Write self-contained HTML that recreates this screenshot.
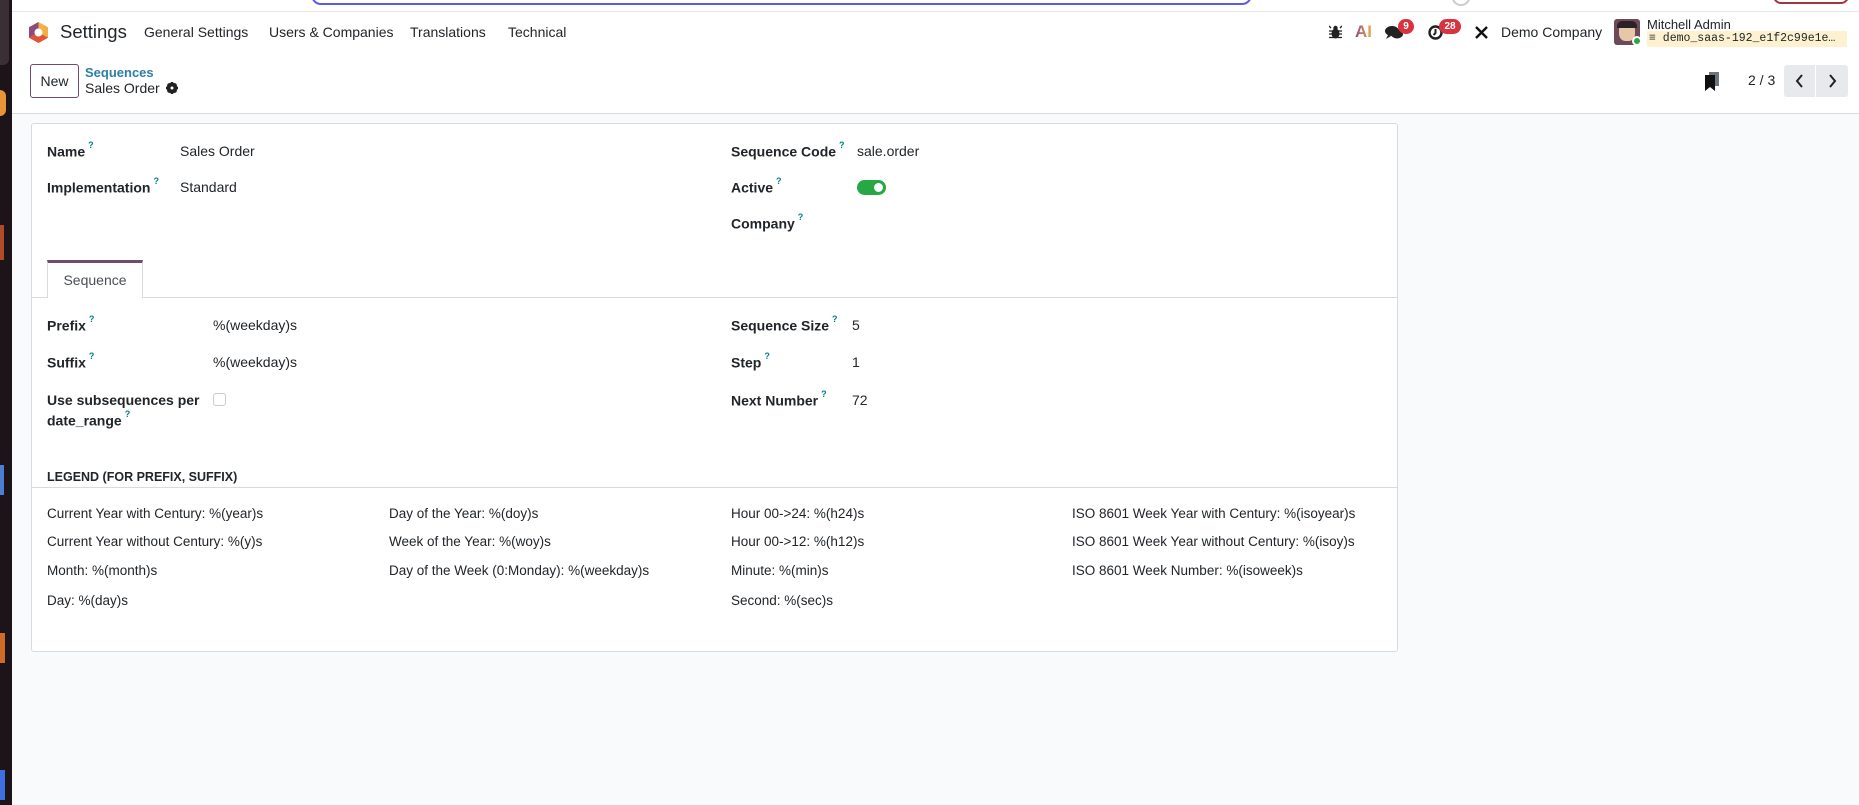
<!DOCTYPE html>
<html><head><meta charset="utf-8">
<style>
*{box-sizing:border-box;margin:0;padding:0}
body{width:1859px;height:805px;overflow:hidden;background:#f9fafb;font-family:"Liberation Sans",sans-serif;color:#212529;position:relative}
.a{position:absolute;white-space:nowrap}
.lbl{font-weight:bold;font-size:14px;color:#212529}
.v{font-size:14px}
sup.q{color:#017e84;font-size:9px;font-weight:bold;margin-left:3px;position:relative;top:-3px}
.nav{font-size:14px;color:#212529}
.lg{font-size:13.5px}
</style></head><body>
<div class="a" style="left:0;top:0;width:1859px;height:12px;background:#fff;border-bottom:1px solid #e5e7ea"></div>
<div class="a" style="left:311px;top:-20px;width:941px;height:25px;border:2px solid #5b5ce6;border-radius:10px"></div>
<div class="a" style="left:1452px;top:-10px;width:18px;height:16px;border:2px solid #ccc;border-radius:50%"></div>
<div class="a" style="left:1773px;top:-12px;width:76px;height:16px;border:2px solid #a3333f;border-radius:8px"></div>
<div class="a" style="left:0;top:0;width:12px;height:805px;background:#1c1418"></div>
<div class="a" style="left:0;top:0;width:9px;height:65px;background:#3a2f35;border-radius:0 0 6px 0"></div>
<div class="a" style="left:0;top:90px;width:6px;height:26px;background:#e8953a;border-radius:0 6px 6px 0"></div>
<div class="a" style="left:0;top:225px;width:4px;height:35px;background:#b04a2a"></div>
<div class="a" style="left:0;top:465px;width:4px;height:30px;background:#4a7fd6"></div>
<div class="a" style="left:0;top:633px;width:5px;height:30px;background:#d06a2a"></div>
<div class="a" style="left:0;top:770px;width:5px;height:30px;background:#3d6fe0"></div>
<div class="a" style="left:12px;top:12px;width:1847px;height:41px;background:#fff"></div>
<svg class="a" style="left:29px;top:22px" width="19" height="21" viewBox="0 0 19 21">
<polygon points="9.5,0 19,5.3 19,15.7 9.5,21 0,15.7 0,5.3" fill="#f0b045"/>
<polygon points="9.5,0 0,5.3 0,15.7 9.5,10.5" fill="#8e4a7f"/>
<polygon points="0,15.7 9.5,21 19,15.7 9.5,10.5" fill="#e2533c"/>
<circle cx="9.5" cy="10.5" r="4" fill="#fff"/></svg>
<div class="a" style="left:60px;top:21px;font-size:18.5px;color:#212529">Settings</div>
<div class="a nav" style="left:144px;top:24px">General Settings</div>
<div class="a nav" style="left:269px;top:24px">Users &amp; Companies</div>
<div class="a nav" style="left:410px;top:24px">Translations</div>
<div class="a nav" style="left:508px;top:24px">Technical</div>
<svg class="a" style="left:1329px;top:25px" width="13" height="14" viewBox="0 0 13 14"><ellipse cx="6.5" cy="8.5" rx="4" ry="5" fill="#222"/><circle cx="6.5" cy="3" r="2.2" fill="#222"/><path d="M0 6h13M0 9h13M0 12.5h13M2 3L0 1M11 3l2-2" stroke="#222" stroke-width="1.3"/></svg>
<div class="a" style="left:1355px;top:22px;font-size:17px;font-weight:bold;background:linear-gradient(90deg,#8e4a7f,#f0b045);-webkit-background-clip:text;color:transparent">AI</div>
<svg class="a" style="left:1385px;top:25px" width="18" height="15" viewBox="0 0 18 15"><ellipse cx="7" cy="6" rx="7" ry="5" fill="#222"/><ellipse cx="12" cy="9" rx="6" ry="4.5" fill="#222"/><path d="M3 10l-2 4 5-3z" fill="#222"/></svg>
<div class="a" style="left:1398px;top:19px;width:16px;height:15px;background:#d9333f;border-radius:8px;color:#fff;font-size:10px;font-weight:bold;text-align:center;line-height:15px">9</div>
<svg class="a" style="left:1428px;top:25px" width="15" height="15" viewBox="0 0 15 15"><circle cx="7.5" cy="7.5" r="6" fill="none" stroke="#222" stroke-width="2.4"/><path d="M7.5 4v4l-2 2" stroke="#222" stroke-width="2" fill="none"/></svg>
<div class="a" style="left:1439px;top:19px;width:22px;height:15px;background:#d9333f;border-radius:8px;color:#fff;font-size:10px;font-weight:bold;text-align:center;line-height:15px">28</div>
<svg class="a" style="left:1474px;top:25px" width="15" height="15" viewBox="0 0 15 15"><path d="M2 2l11 11M13 2L2 13" stroke="#111" stroke-width="2.4"/></svg>
<div class="a" style="left:1501px;top:24px;font-size:14px">Demo Company</div>
<div class="a" style="left:1614px;top:19px;width:26px;height:26px;background:#6b4a5a;border-radius:3px;overflow:hidden"><div style="position:absolute;left:5px;top:4px;width:16px;height:18px;background:#e8c6a8;border-radius:40%"></div><div style="position:absolute;left:3px;top:2px;width:20px;height:7px;background:#2a2226;border-radius:5px 5px 0 0"></div></div>
<div class="a" style="left:1632px;top:36px;width:10px;height:10px;background:#28a745;border:2px solid #fff;border-radius:50%"></div>
<div class="a" style="left:1647px;top:17px;font-size:13px">Mitchell Admin</div>
<div class="a" style="left:1647px;top:31px;width:200px;height:16px;background:#fdf1cf;font-family:'Liberation Mono',monospace;font-size:11.5px;line-height:16px;padding-left:2px;overflow:hidden">≡ demo_saas-192_e1f2c99e1e…</div>
<div class="a" style="left:12px;top:53px;width:1847px;height:61px;background:#fff;border-bottom:1px solid #d8dadd"></div>
<div class="a" style="left:30px;top:64px;width:49px;height:34px;border:1px solid #714b67;border-radius:3px;font-size:14px;text-align:center;line-height:32px;background:#fff">New</div>
<div class="a" style="left:85px;top:65px;font-size:13px;font-weight:bold;color:#2c7fa8">Sequences</div>
<div class="a" style="left:85px;top:80px;font-size:14px">Sales Order</div>
<svg class="a" style="left:166px;top:82px" width="12" height="12" viewBox="0 0 12 12"><circle cx="6" cy="6" r="4" fill="none" stroke="#222" stroke-width="3"/><path d="M6 0v12M0 6h12M1.8 1.8l8.4 8.4M10.2 1.8l-8.4 8.4" stroke="#222" stroke-width="2"/><circle cx="6" cy="6" r="1.5" fill="#fff"/></svg>
<svg class="a" style="left:1705px;top:72px" width="14" height="19" viewBox="0 0 14 19"><rect x="4" y="0" width="10" height="14" fill="#6c757d"/><path d="M0 3h10v16l-5-4-5 4z" fill="#111"/></svg>
<div class="a" style="left:1748px;top:72px;font-size:14px">2 / 3</div>
<div class="a" style="left:1784px;top:65px;width:64px;height:32px;background:#e7e9ed;border-radius:3px"></div>
<div class="a" style="left:1815px;top:65px;width:1px;height:32px;background:#fff"></div>
<svg class="a" style="left:1794px;top:73px" width="12" height="16" viewBox="0 0 12 16"><path d="M8 2L3 8l5 6" stroke="#222" stroke-width="2" fill="none"/></svg>
<svg class="a" style="left:1826px;top:73px" width="12" height="16" viewBox="0 0 12 16"><path d="M4 2l5 6-5 6" stroke="#222" stroke-width="2" fill="none"/></svg>
<div class="a" style="left:31px;top:123px;width:1367px;height:529px;background:#fff;border:1px solid #d8dadd;border-radius:3px"></div>
<div class="a lbl" style="left:47px;top:143px">Name<sup class="q">?</sup></div>
<div class="a v" style="left:180px;top:143px">Sales Order</div>
<div class="a lbl" style="left:47px;top:179px">Implementation<sup class="q">?</sup></div>
<div class="a v" style="left:180px;top:179px">Standard</div>
<div class="a lbl" style="left:731px;top:143px">Sequence Code<sup class="q">?</sup></div>
<div class="a v" style="left:857px;top:143px">sale.order</div>
<div class="a lbl" style="left:731px;top:179px">Active<sup class="q">?</sup></div>
<div class="a" style="left:857px;top:180px;width:29px;height:15px;background:#28a745;border-radius:8px"><div style="position:absolute;right:3px;top:3px;width:9px;height:9px;background:#fff;border-radius:50%"></div></div>
<div class="a lbl" style="left:731px;top:215px">Company<sup class="q">?</sup></div>
<div class="a" style="left:32px;top:297px;width:1365px;height:1px;background:#d8dadd"></div>
<div class="a" style="left:47px;top:260px;width:96px;height:38px;background:#fff;border:1px solid #d8dadd;border-top:3px solid #714b67;border-bottom:none;font-size:14px;color:#4a4f55;text-align:center;line-height:34px">Sequence</div>
<div class="a lbl" style="left:47px;top:317px">Prefix<sup class="q">?</sup></div>
<div class="a v" style="left:213px;top:317px">%(weekday)s</div>
<div class="a lbl" style="left:47px;top:354px">Suffix<sup class="q">?</sup></div>
<div class="a v" style="left:213px;top:354px">%(weekday)s</div>
<div class="a lbl" style="left:47px;top:392px">Use subsequences per</div>
<div class="a lbl" style="left:47px;top:412px">date_range<sup class="q">?</sup></div>
<div class="a" style="left:213px;top:393px;width:13px;height:13px;border:1px solid #c9ccd0;border-radius:3px"></div>
<div class="a lbl" style="left:731px;top:317px">Sequence Size<sup class="q">?</sup></div>
<div class="a v" style="left:852px;top:317px">5</div>
<div class="a lbl" style="left:731px;top:354px">Step<sup class="q">?</sup></div>
<div class="a v" style="left:852px;top:354px">1</div>
<div class="a lbl" style="left:731px;top:392px">Next Number<sup class="q">?</sup></div>
<div class="a v" style="left:852px;top:392px">72</div>
<div class="a" style="left:47px;top:470px;font-size:12.5px;font-weight:bold">LEGEND (FOR PREFIX, SUFFIX)</div>
<div class="a" style="left:32px;top:487px;width:1365px;height:1px;background:#d8dadd"></div>
<div class="a lg" style="left:47px;top:506px">Current Year with Century: %(year)s</div>
<div class="a lg" style="left:47px;top:534px">Current Year without Century: %(y)s</div>
<div class="a lg" style="left:47px;top:563px">Month: %(month)s</div>
<div class="a lg" style="left:47px;top:593px">Day: %(day)s</div>
<div class="a lg" style="left:389px;top:506px">Day of the Year: %(doy)s</div>
<div class="a lg" style="left:389px;top:534px">Week of the Year: %(woy)s</div>
<div class="a lg" style="left:389px;top:563px">Day of the Week (0:Monday): %(weekday)s</div>
<div class="a lg" style="left:731px;top:506px">Hour 00-&gt;24: %(h24)s</div>
<div class="a lg" style="left:731px;top:534px">Hour 00-&gt;12: %(h12)s</div>
<div class="a lg" style="left:731px;top:563px">Minute: %(min)s</div>
<div class="a lg" style="left:731px;top:593px">Second: %(sec)s</div>
<div class="a lg" style="left:1072px;top:506px">ISO 8601 Week Year with Century: %(isoyear)s</div>
<div class="a lg" style="left:1072px;top:534px">ISO 8601 Week Year without Century: %(isoy)s</div>
<div class="a lg" style="left:1072px;top:563px">ISO 8601 Week Number: %(isoweek)s</div>
</body></html>
